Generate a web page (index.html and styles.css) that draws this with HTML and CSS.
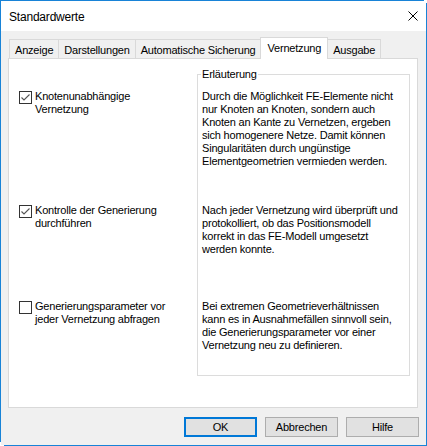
FILE: index.html
```html
<!DOCTYPE html>
<html lang="de">
<head>
    <meta charset="UTF-8">
    <title>Standardwerte</title>
    <link rel="stylesheet" href="styles.css">
</head>
<body>
    <div class="window">
        <div class="frame">
            <div class="titlebar">
                <span class="title">Standardwerte</span>
                <svg class="close" width="10" height="10" viewBox="0 0 10 10">
                    <path d="M0.5 0.5 L9.5 9.5 M9.5 0.5 L0.5 9.5" stroke="#000" stroke-width="1" fill="none"/>
                </svg>
            </div>

            <div class="content">
                <ul class="tabs">
                    <li class="tab">Anzeige</li>
                    <li class="tab">Darstellungen</li>
                    <li class="tab">Automatische Sicherung</li>
                    <li class="tab active">Vernetzung</li>
                    <li class="tab">Ausgabe</li>
                </ul>

                <div class="panel">
                    <div class="options">
                        <label class="option">
                            <span class="check checked">
                                <svg width="11" height="11" viewBox="0 0 11 11"><path d="M1.5 5.5 L4 8 L9.5 2.5" stroke="#555" stroke-width="1.1" fill="none"/></svg>
                            </span>
                            <span class="label">Knotenunabhängige<br>Vernetzung</span>
                        </label>
                        <label class="option">
                            <span class="check checked">
                                <svg width="11" height="11" viewBox="0 0 11 11"><path d="M1.5 5.5 L4 8 L9.5 2.5" stroke="#555" stroke-width="1.1" fill="none"/></svg>
                            </span>
                            <span class="label">Kontrolle der Generierung<br>durchführen</span>
                        </label>
                        <label class="option">
                            <span class="check"></span>
                            <span class="label">Generierungsparameter vor<br>jeder Vernetzung abfragen</span>
                        </label>
                    </div>

                    <fieldset class="group">
                        <legend>Erläuterung</legend>
                        <div class="descs">
                            <p>Durch die Möglichkeit FE-Elemente nicht<br>nur Knoten an Knoten, sondern auch<br>Knoten an Kante zu Vernetzen, ergeben<br>sich homogenere Netze. Damit können<br>Singularitäten durch ungünstige<br>Elementgeometrien vermieden werden.</p>
                            <p>Nach jeder Vernetzung wird überprüft und<br>protokolliert, ob das Positionsmodell<br>korrekt in das FE-Modell umgesetzt<br>werden konnte.</p>
                            <p>Bei extremen Geometrieverhältnissen<br>kann es in Ausnahmefällen sinnvoll sein,<br>die Generierungsparameter vor einer<br>Vernetzung neu zu definieren.</p>
                        </div>
                    </fieldset>
                </div>

                <div class="buttons">
                    <button class="btn default">OK</button>
                    <button class="btn">Abbrechen</button>
                    <button class="btn">Hilfe</button>
                </div>
            </div>
        </div>
    </div>
</body>
</html>
```

FILE: styles.css
```css
* {
    margin: 0;
    padding: 0;
    box-sizing: border-box;
}

body {
    background: #fff;
    font-family: 'Liberation Sans', Arial, sans-serif;
    font-size: 11px;
    letter-spacing: -0.2px;
    color: #000;
}

/* window frame: the outer blue edges are slightly offset, as in the capture */
.window {
    width: 427px;
    height: 446px;
    padding: 1px;
    background:
        linear-gradient(#1883d7, #1883d7) 0 0 / 424px 1px no-repeat,
        linear-gradient(#1883d7, #1883d7) 0 0 / 1px 442px no-repeat,
        linear-gradient(#1883d7, #1883d7) 426px 3px / 1px 443px no-repeat,
        linear-gradient(#1883d7, #1883d7) 4px 445px / 423px 1px no-repeat;
}

.frame {
    height: 444px;
    display: flex;
    flex-direction: column;
    background: #f0f0f0;
}

.titlebar {
    height: 30px;
    background: #fff;
    display: flex;
    align-items: center;
    justify-content: space-between;
    padding: 0 8px 0 8px;
}

.title {
    font-size: 12px;
    line-height: 30px;
    padding-top: 1px;
}

.close {
    margin-top: -1px;
}

.content {
    flex: 1;
    padding: 6px 8px 0 7px;
}

/* tabs */
.tabs {
    list-style: none;
    display: flex;
    align-items: flex-end;
    margin-left: 1px;
    margin-bottom: -1px;
    position: relative;
    z-index: 1;
}

.tab {
    height: 20px;
    padding: 2px 5px 0;
    line-height: 16px;
    border: 1px solid #d9d9d9;
    margin-left: -1px;
    background: #f0f0f0;
    white-space: nowrap;
}

.tab:first-child {
    margin-left: 0;
}

.tab.active {
    height: 22px;
    padding: 2px 6px 0;
    background: #fff;
    border-bottom: none;
}

/* page */
.panel {
    height: 350px;
    border: 1px solid #d9d9d9;
    background: #fff;
    display: grid;
    grid-template-columns: 188px 213px;
    align-items: start;
    padding-top: 9px;
}

.options {
    margin-top: 22px;
    padding-left: 10px;
    display: grid;
    grid-template-rows: 114px 96px auto;
}

.option {
    display: flex;
    align-items: flex-start;
    line-height: 13px;
}

.check {
    width: 13px;
    height: 13px;
    margin-top: 1px;
    border: 1px solid #333;
    background: #fff;
    display: flex;
    flex-shrink: 0;
}

.label {
    margin-left: 3px;
    white-space: nowrap;
}

.group {
    border: 1px solid #dcdcdc;
    padding: 9px 4px 23px 4px;
    min-width: 0;
}

.group legend {
    padding: 0 1px;
    margin-left: -1px;
    line-height: 13px;
}

.descs {
    display: grid;
    grid-template-rows: 114px 96px auto;
}

.descs p {
    line-height: 13px;
    white-space: nowrap;
}

/* buttons */
.buttons {
    display: flex;
    justify-content: flex-end;
    gap: 8px;
    margin-top: 9px;
    margin-right: -1px;
}

.btn {
    width: 73px;
    height: 20px;
    border: 1px solid #adadad;
    background: #e1e1e1;
    font-family: inherit;
    font-size: 11px;
    letter-spacing: inherit;
    color: #000;
}

.btn.default {
    border: 2px solid #0078d7;
}
```
